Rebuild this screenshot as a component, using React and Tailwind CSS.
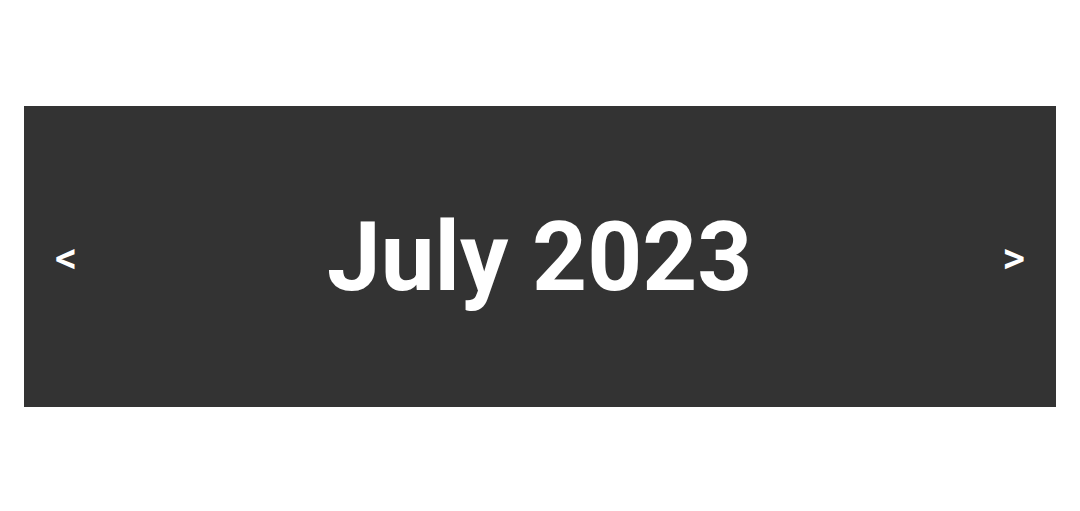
export default function App() {
  return (
    <div className="min-h-[511px] bg-white px-6 pt-[106px] font-['Roboto',sans-serif]">
      {/* Month header with prev / next controls */}
      <div className="h-[301px] bg-[#333333] flex items-center justify-between pl-[31px] pr-[31px] text-white">
        <button className="text-[44px] font-medium leading-none pt-[2px]">&lt;</button>
        <h1 className="text-[96px] font-bold leading-none">July 2023</h1>
        <button className="text-[44px] font-medium leading-none pt-[2px]">&gt;</button>
      </div>
    </div>
  );
}
